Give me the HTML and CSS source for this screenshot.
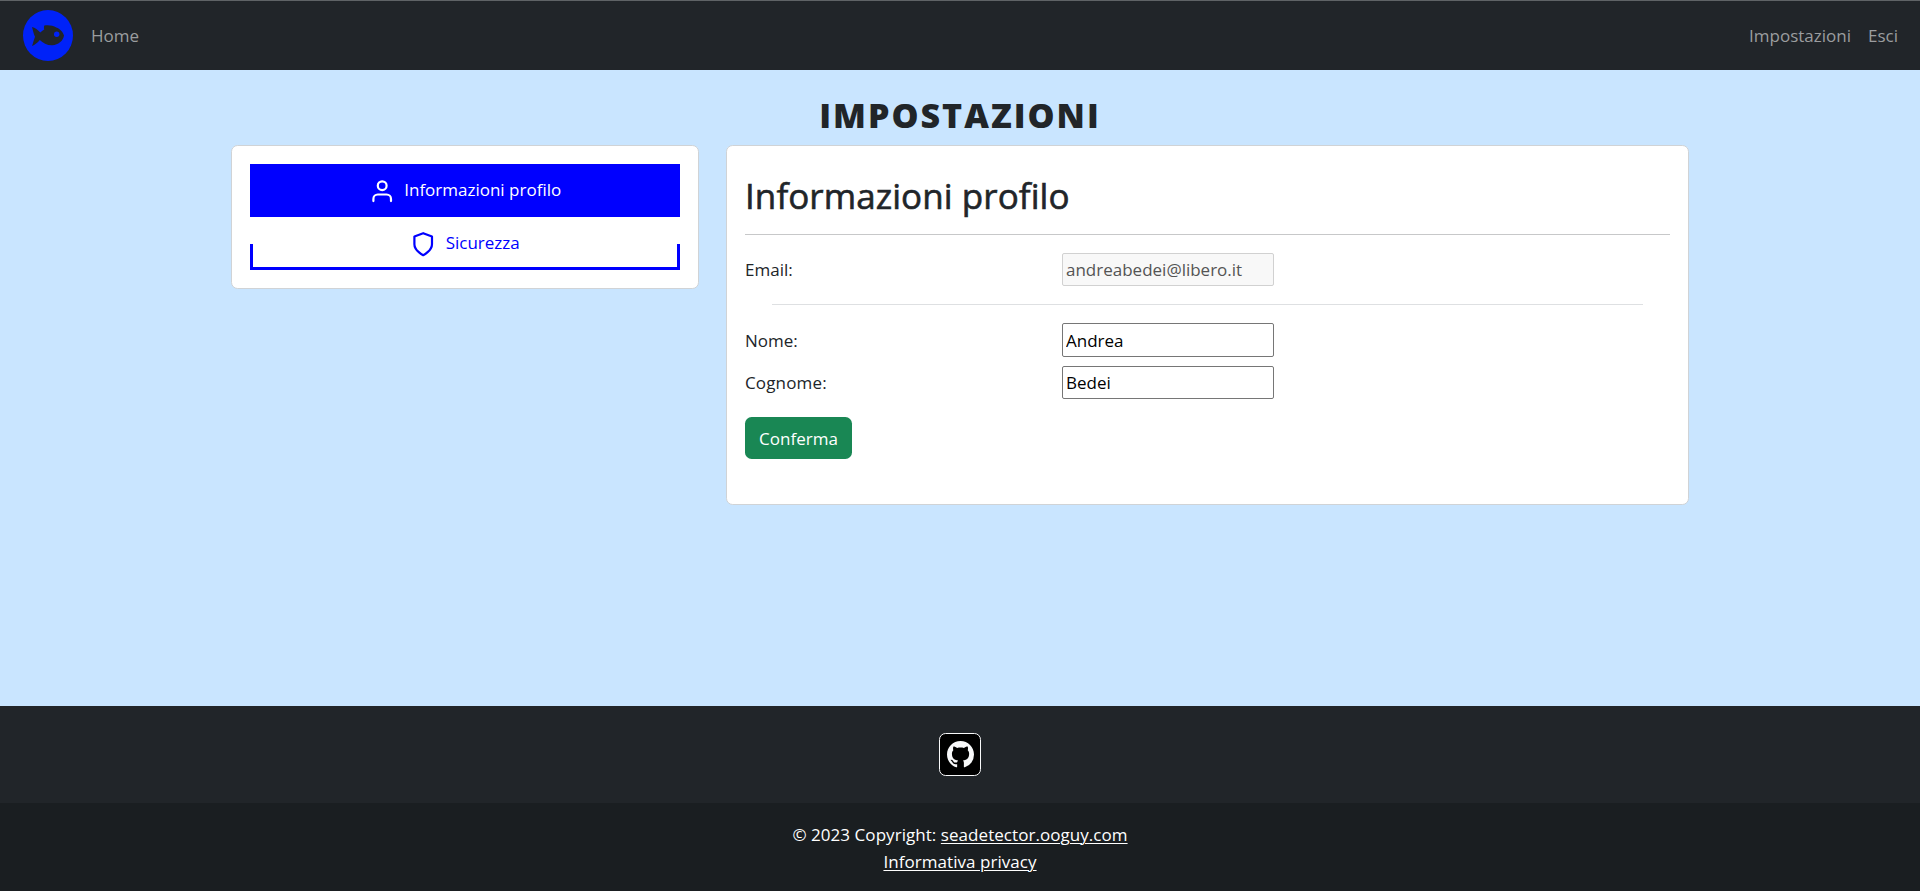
FILE: index.html
```html
<!DOCTYPE html>
<html lang="it">
<head>
<meta charset="utf-8">
<title>Impostazioni</title>
<link rel="stylesheet" href="styles.css">
</head>
<body>
<nav class="navbar">
  <a class="brand" href="#" aria-label="Home">
    <svg class="logo" viewBox="0 0 50 51">
      <ellipse cx="25" cy="25.5" rx="25" ry="25.5" fill="#0022f8"/>
      <path fill="#212529" d="M9 17c3 .7 6 3 8.300 5.500 1.300-1.200 2.700-2.200 4-3-.5-1.500-.4-2.800 0-4 4-.7 8.700-.2 12 2 3.700 1.200 6.700 4.600 7.700 8-.8 5.500-6 9.300-11.500 9.800-5 .3-9.500-2.200-12.700-5.300-2.300 2.700-4.800 4.800-7.800 6 1.300-3.200 1.500-5.300 3-9.200C10.500 24 10 20 9 17z"/>
      <circle cx="33.700" cy="24.300" r="2.700" fill="#0022f8"/>
    </svg>
  </a>
  <a class="nav-link nav-home" href="#">Home</a>
  <a class="nav-link nav-settings" href="#">Impostazioni</a>
  <a class="nav-link nav-exit" href="#">Esci</a>
</nav>
<main class="main">
  <h1 class="title">IMPOSTAZIONI</h1>
  <div class="columns">
    <aside class="card menu">
      <a class="menu-item active" href="#">
        <svg class="icon" viewBox="0 0 24 24"><path d="M20 21v-2a4 4 0 0 0-4-4H8a4 4 0 0 0-4 4v2"/><circle cx="12" cy="7" r="4"/></svg>
        <span>Informazioni profilo</span>
      </a>
      <a class="menu-item outlined" href="#">
        <svg class="icon" viewBox="0 0 24 24"><path d="M12 22s8-4 8-10V5l-8-3-8 3v7c0 6 8 10 8 10z"/></svg>
        <span>Sicurezza</span>
      </a>
    </aside>
    <section class="card panel">
      <h2 class="heading">Informazioni profilo</h2>
      <hr class="rule">
      <form class="form">
        <div class="row"><label for="email">Email:</label><input id="email" value="andreabedei@libero.it" disabled></div>
        <hr class="rule inner">
        <div class="row"><label for="nome">Nome:</label><input class="tall" id="nome" value="Andrea"></div>
        <div class="row second"><label class="wide" for="cognome">Cognome:</label><input id="cognome" value="Bedei"></div>
        <button class="confirm" type="button">Conferma</button>
      </form>
    </section>
  </div>
</main>
<footer class="footer">
  <div class="social">
    <a class="github" href="#" aria-label="GitHub">
      <svg viewBox="0 0 16 16"><path fill="#f8f9fa" d="M8 0C3.580 0 0 3.580 0 8c0 3.540 2.290 6.530 5.470 7.590.4.070.55-.17.55-.38 0-.19-.01-.82-.01-1.490-2.010.37-2.530-.49-2.690-.94-.09-.23-.48-.94-.82-1.130-.28-.15-.68-.52-.01-.53.63-.01 1.080.58 1.230.82.72 1.210 1.870.87 2.330.66.07-.52.28-.87.51-1.070-1.780-.2-3.640-.89-3.640-3.950 0-.87.31-1.590.82-2.150-.08-.2-.36-1.020.08-2.120 0 0 .67-.21 2.200.82.64-.18 1.320-.27 2-.27s1.360.09 2 .27c1.530-1.040 2.200-.82 2.200-.82.44 1.100.16 1.920.08 2.120.51.56.82 1.270.82 2.150 0 3.070-1.870 3.750-3.650 3.950.29.25.54.73.54 1.480 0 1.070-.01 1.930-.01 2.200 0 .21.15.46.55.38A8.010 8.010 0 0 0 16 8c0-4.420-3.580-8-8-8z"/></svg>
    </a>
  </div>
  <div class="legal">
    <div>© 2023 Copyright: <a href="#">seadetector.ooguy.com</a></div>
    <div><a href="#">Informativa privacy</a></div>
  </div>
</footer>
</body>
</html>
```
FILE: styles.css
```css
* { box-sizing: border-box; }
body {
  margin: 0;
  height: 891px;
  display: flex;
  flex-direction: column;
  overflow: hidden;
  background: #c9e5ff;
  color: #212529;
  font-family: "Open Sans", "Noto Sans", sans-serif;
  font-size: 17px;
  line-height: 27px;
  letter-spacing: 0;
}
a { color: inherit; }
.navbar {
  height: 70px;
  flex: none;
  display: flex;
  align-items: center;
  padding: 0 22px 0 23px;
  background: #212529;
  border-top: 1px solid #5f6366;
}
.brand { width: 50px; height: 51px; }
.logo { display: block; width: 50px; height: 51px; }
.nav-link { padding-bottom: 1px; color: #9b9d9f; text-decoration: none; white-space: nowrap; }
.nav-home { margin-left: 18px; }
.nav-settings { margin-left: auto; }
.nav-exit { margin-left: 17px; }
.main { flex: 1; }
.title {
  margin: 24px 0 0;
  height: 51px;
  line-height: 42px;
  text-align: center;
  font-size: 34px;
  font-weight: 800;
  letter-spacing: 2px;
}
.columns {
  width: 1458px;
  margin: 0 auto;
  display: flex;
  align-items: flex-start;
  gap: 27px;
}
.card { background: #fff; border: 1px solid #d0d3d6; border-radius: 6.6px; }
.menu { width: 468px; height: 144px; padding: 18px; }
.menu-item {
  height: 53px;
  display: flex;
  justify-content: center;
  gap: 9px;
  padding-top: 14px;
  color: #00f;
  text-decoration: none;
  line-height: 24px;
}
.menu-item.active { background: #00f; color: #fff; }
.outlined { position: relative; }
.outlined::after {
  content: "";
  position: absolute;
  inset: 27px 0 0;
  border: 3px solid #00f;
  border-top: 0;
}
.icon {
  width: 26.4px;
  height: 26.4px;
  fill: none;
  stroke: currentColor;
  stroke-width: 2;
  stroke-linecap: round;
  stroke-linejoin: round;
}
.panel { flex: 1; height: 360px; padding: 18px; }
.heading {
  margin: 10px 0 0;
  height: 43px;
  line-height: 43px;
  font-size: 35px;
  font-weight: 500;
  letter-spacing: 0.07px;
  -webkit-text-stroke: 0.6px #212529;
  white-space: nowrap;
}
.rule { height: 1px; margin: 17px 0 18px; border: 0; background: #c7c8c9; }
.rule.inner { margin: 18px 27px; background: #dee0e2; }
.row { display: flex; align-items: center; }
.row label { width: 317px; }
.row label.wide { letter-spacing: 0.15px; }
.row.second { margin-top: 9px; }
.row input {
  width: 212px;
  height: 33px;
  padding: 1px 3px;
  border: 1px solid #767676;
  border-radius: 2px;
  background: #fff;
  color: #000;
  font: inherit;
  letter-spacing: inherit;
}
.row input.tall { height: 34px; }
.row input:disabled { border-color: #d1d1d1; background: #f8f8f8; color: #545454; }
.confirm {
  display: block;
  width: 107px;
  height: 42px;
  margin-top: 18px;
  padding: 0;
  border: 0;
  border-radius: 6.6px;
  background: #198754;
  color: #fff;
  font: inherit;
  letter-spacing: inherit;
}
.footer { flex: none; height: 185px; background: #212529; color: #fff; }
.social { height: 97px; display: flex; justify-content: center; padding-top: 27px; }
.github {
  width: 42px;
  height: 43px;
  display: flex;
  align-items: center;
  justify-content: center;
  background: #000;
  border: 1px solid #f8f9fa;
  border-radius: 6.6px;
}
.github svg { width: 27px; height: 27px; }
.legal { height: 88px; padding-top: 18px; background: #1a1e21; text-align: center; letter-spacing: 0.05px; }
.legal a { text-underline-offset: 2px; text-decoration-thickness: 1px; }
```
